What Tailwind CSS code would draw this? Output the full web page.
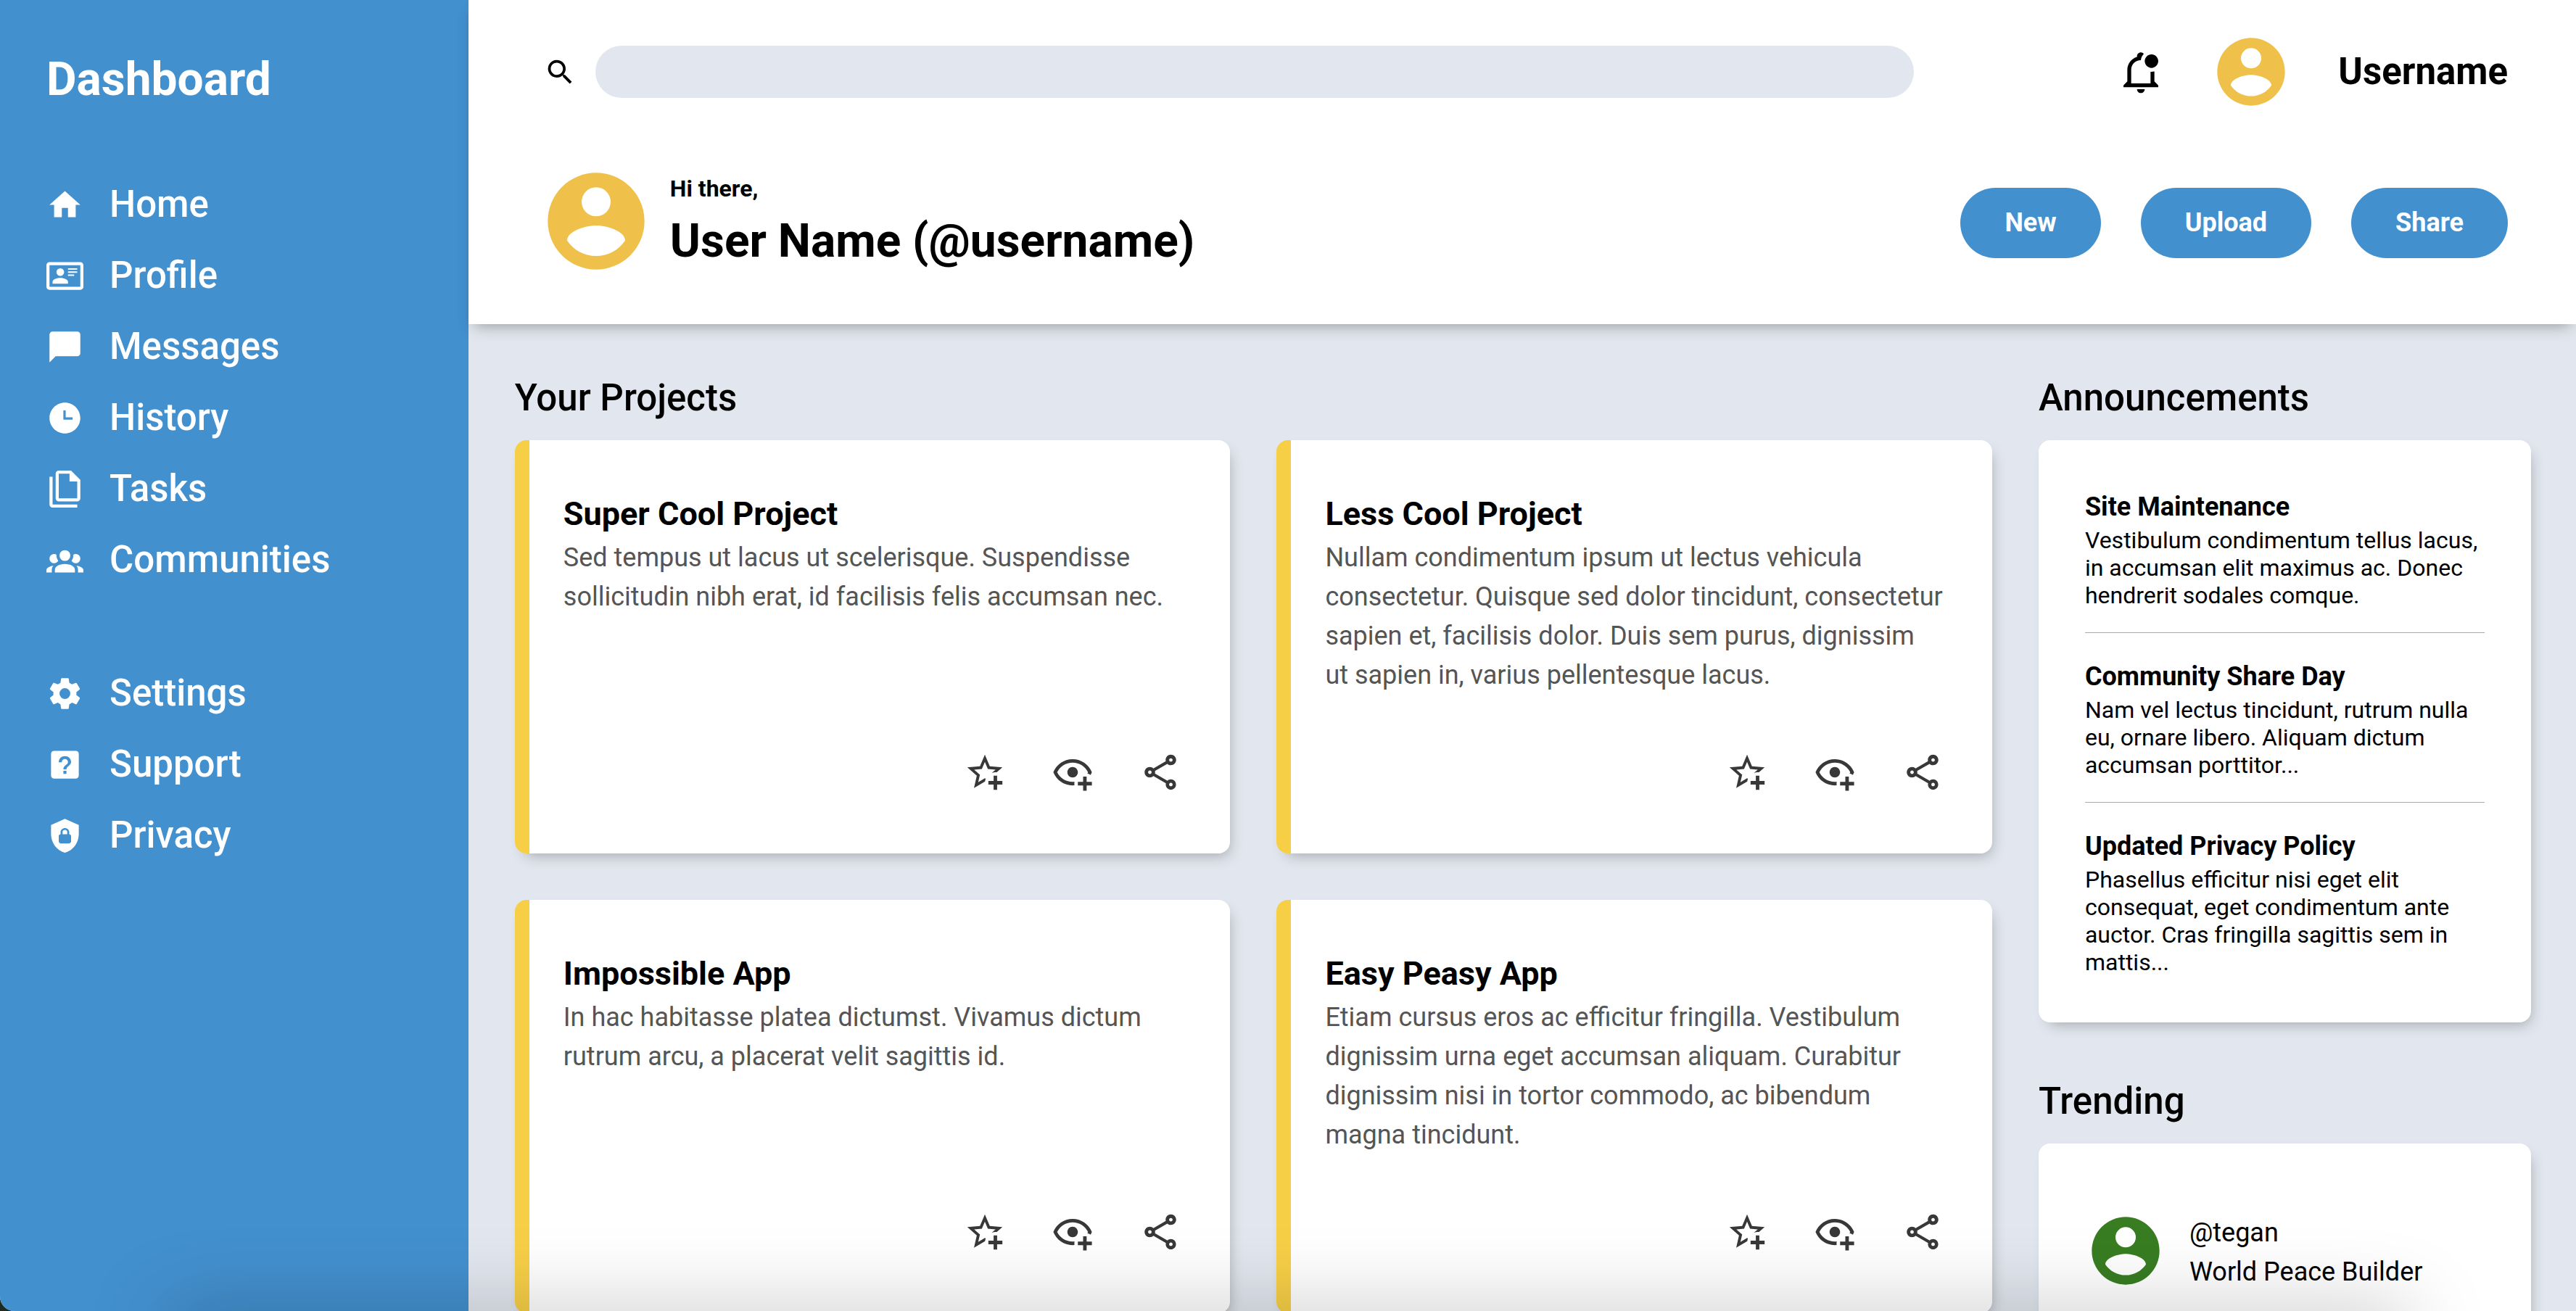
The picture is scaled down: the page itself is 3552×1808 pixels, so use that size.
<!DOCTYPE html>
<html lang="en">
<head>
<meta charset="utf-8">
<meta name="viewport" content="width=device-width, initial-scale=1">
<title>Dashboard</title>
<script src="https://cdn.jsdelivr.net/npm/@tailwindcss/browser@4"></script>
</head>
<body class="bg-[#1f2a22] font-['Roboto',sans-serif] text-black">

<!-- Icon sprite -->
<svg class="hidden" aria-hidden="true">
  <symbol id="home" viewBox="0 0 24 24"><path d="M10,20V14H14V20H19V12H22L12,3L2,12H5V20H10Z"/></symbol>
  <symbol id="profile" viewBox="0 0 24 24"><path d="M22,3H2C0.91,3.04 0.04,3.91 0,5V19C0.04,20.09 0.91,20.96 2,21H22C23.09,20.96 23.96,20.09 24,19V5C23.96,3.91 23.09,3.04 22,3M22,19H2V5H22V19M14,17V15.75C14,14.09 10.66,13.25 9,13.25C7.34,13.25 4,14.09 4,15.75V17H14M9,7A2.5,2.5 0 0,0 6.5,9.5A2.5,2.5 0 0,0 9,12A2.5,2.5 0 0,0 11.5,9.5A2.5,2.5 0 0,0 9,7M14,7V8H20V7H14M14,9V10H20V9H14M14,11V12H18V11H14"/></symbol>
  <symbol id="messages" viewBox="0 0 24 24"><path d="M20,2H4A2,2 0 0,0 2,4V22L6,18H20A2,2 0 0,0 22,16V4C22,2.89 21.1,2 20,2Z"/></symbol>
  <symbol id="history" viewBox="0 0 24 24"><path d="M12 2C6.5 2 2 6.5 2 12C2 17.5 6.5 22 12 22C17.5 22 22 17.5 22 12S17.5 2 12 2M17 13H11V7H12.5V11.5H17V13Z"/></symbol>
  <symbol id="tasks" viewBox="0 0 24 24"><path d="M16 0H8C6.9 0 6 .9 6 2V18C6 19.1 6.9 20 8 20H20C21.1 20 22 19.1 22 18V6L16 0M20 18H8V2H15V7H20V18M4 4V22H20V24H4C2.9 24 2 23.1 2 22V4H4Z"/></symbol>
  <symbol id="communities" viewBox="0 0 24 24"><path d="M12,5.5A3.5,3.5 0 0,1 15.5,9A3.5,3.5 0 0,1 12,12.5A3.5,3.5 0 0,1 8.5,9A3.5,3.5 0 0,1 12,5.5M5,8C5.56,8 6.08,8.15 6.53,8.42C6.38,9.85 6.8,11.27 7.66,12.38C7.16,13.34 6.16,14 5,14A3,3 0 0,1 2,11A3,3 0 0,1 5,8M19,8A3,3 0 0,1 22,11A3,3 0 0,1 19,14C17.84,14 16.84,13.34 16.34,12.38C17.2,11.27 17.62,9.85 17.47,8.42C17.92,8.15 18.44,8 19,8M5.5,18.25C5.5,16.18 8.41,14.5 12,14.5C15.59,14.5 18.5,16.18 18.5,18.25V20H5.5V18.25M0,20V18.5C0,17.11 1.89,15.94 4.45,15.6C3.86,16.28 3.5,17.22 3.5,18.25V20H0M24,20H20.5V18.25C20.5,17.22 20.14,16.28 19.55,15.6C22.11,15.94 24,17.11 24,18.5V20Z"/></symbol>
  <symbol id="settings" viewBox="0 0 24 24"><path d="M12,15.5A3.5,3.5 0 0,1 8.5,12A3.5,3.5 0 0,1 12,8.5A3.5,3.5 0 0,1 15.5,12A3.5,3.5 0 0,1 12,15.5M19.43,12.97C19.47,12.65 19.5,12.33 19.5,12C19.5,11.67 19.47,11.34 19.43,11L21.54,9.37C21.73,9.22 21.78,8.95 21.66,8.73L19.66,5.27C19.54,5.05 19.27,4.96 19.05,5.05L16.56,6.05C16.04,5.66 15.5,5.32 14.87,5.07L14.5,2.42C14.46,2.18 14.25,2 14,2H10C9.75,2 9.54,2.18 9.5,2.42L9.13,5.07C8.5,5.32 7.96,5.66 7.44,6.05L4.95,5.05C4.73,4.96 4.46,5.05 4.34,5.27L2.34,8.73C2.21,8.95 2.27,9.22 2.46,9.37L4.57,11C4.53,11.34 4.5,11.67 4.5,12C4.5,12.33 4.53,12.65 4.57,12.97L2.46,14.63C2.27,14.78 2.21,15.05 2.34,15.27L4.34,18.73C4.46,18.95 4.73,19.03 4.95,18.95L7.44,17.94C7.96,18.34 8.5,18.68 9.13,18.93L9.5,21.58C9.54,21.82 9.75,22 10,22H14C14.25,22 14.46,21.82 14.5,21.58L14.87,18.93C15.5,18.67 16.04,18.34 16.56,17.94L19.05,18.95C19.27,19.03 19.54,18.95 19.66,18.73L21.66,15.27C21.78,15.05 21.73,14.78 21.54,14.63L19.43,12.97Z"/></symbol>
  <symbol id="support" viewBox="0 0 24 24"><path d="M5,3H19A2,2 0 0,1 21,5V19A2,2 0 0,1 19,21H5A2,2 0 0,1 3,19V5A2,2 0 0,1 5,3M11,16V18H13V16H11M12,6.5C9.8,6.5 8,8.1 8,10.5H10C10,9.2 10.9,8.4 12,8.4C13.1,8.4 14,9.2 14,10.3C14,12.2 11,12.2 11,15H13C13,13 16,12.5 16,10.3C16,8.1 14.2,6.5 12,6.5Z"/></symbol>
  <symbol id="privacy" viewBox="0 0 24 24"><path d="M12,1L3,5V11C3,16.55 6.84,21.74 12,23C17.16,21.74 21,16.55 21,11V5L12,1M12,7C13.4,7 14.8,8.1 14.8,9.5V11C15.4,11 16,11.6 16,12.3V15.8C16,16.4 15.4,17 14.7,17H9.2C8.6,17 8,16.4 8,15.7V12.2C8,11.6 8.6,11 9.2,11V9.5C9.2,8.1 10.6,7 12,7M12,8.2C11.2,8.2 10.5,8.7 10.5,9.5V11H13.5V9.5C13.5,8.7 12.8,8.2 12,8.2Z"/></symbol>
  <symbol id="search" viewBox="0 0 24 24"><path d="M9.5,3A6.5,6.5 0 0,1 16,9.5C16,11.11 15.41,12.59 14.44,13.73L14.71,14H15.5L20.5,19L19,20.5L14,15.5V14.71L13.73,14.44C12.59,15.41 11.11,16 9.5,16A6.5,6.5 0 0,1 3,9.5A6.5,6.5 0 0,1 9.5,3M9.5,5C7,5 5,7 5,9.5C5,12 7,14 9.5,14C12,14 14,12 14,9.5C14,7 12,5 9.5,5Z"/></symbol>
  <symbol id="bell" viewBox="0 0 24 24"><path d="M19 17V11.8C18.5 11.9 18 12 17.5 12H17V18H7V11C7 8.2 9.2 6 12 6C12.1 4.7 12.7 3.6 13.5 2.7C13.2 2.3 12.6 2 12 2C10.9 2 10 2.9 10 4V4.3C7 5.2 5 7.9 5 11V17L3 19V20H21V19L19 17M10 21C10 22.1 10.9 23 12 23S14 22.1 14 21H10M21 6.5C21 8.4 19.4 10 17.5 10S14 8.4 14 6.5 15.6 3 17.5 3 21 4.6 21 6.5"/></symbol>
  <symbol id="account" viewBox="0 0 24 24"><path d="M12,19.2C9.5,19.2 7.29,17.92 6,16C6.03,14 10,12.9 12,12.9C14,12.9 17.97,14 18,16C16.71,17.92 14.5,19.2 12,19.2M12,5A3,3 0 0,1 15,8A3,3 0 0,1 12,11A3,3 0 0,1 9,8A3,3 0 0,1 12,5M12,2A10,10 0 0,0 2,12A10,10 0 0,0 12,22A10,10 0 0,0 22,12C22,6.47 17.5,2 12,2Z"/></symbol>
  <symbol id="star" viewBox="0 0 24 24"><path d="M5.8 21L7.4 14L2 9.2L9.2 8.6L12 2L14.8 8.6L22 9.2L18.8 12H18C17.3 12 16.6 12.1 15.9 12.4L18.1 10.5L13.7 10.1L12 6.1L10.3 10.1L5.9 10.5L9.2 13.4L8.2 17.7L12 15.4L12.5 15.7C12.3 16.2 12.1 16.8 12.1 17.3L5.8 21M17 14V17H14V19H17V22H19V19H22V17H19V14H17Z"/></symbol>
  <symbol id="eye" viewBox="0 0 24 24"><path d="M12 4.5C7 4.5 2.73 7.61 1 12C2.73 16.39 7 19.5 12 19.5C12.36 19.5 12.72 19.5 13.08 19.45C13.03 19.13 13 18.82 13 18.5C13 18.14 13.04 17.78 13.1 17.42C12.74 17.46 12.37 17.5 12 17.5C8.24 17.5 4.83 15.36 3.18 12C4.83 8.64 8.24 6.5 12 6.5S19.17 8.64 20.82 12C20.7 12.24 20.56 12.45 20.43 12.68C21.09 12.84 21.72 13.11 22.29 13.5C22.56 13 22.8 12.5 23 12C21.27 7.61 17 4.5 12 4.5M12 9C10.34 9 9 10.34 9 12S10.34 15 12 15 15 13.66 15 12 13.66 9 12 9M18 14.5V17.5H15V19.5H18V22.5H20V19.5H23V17.5H20V14.5H18Z"/></symbol>
  <symbol id="share" viewBox="0 0 24 24"><path d="M18 16.08C17.24 16.08 16.56 16.38 16.04 16.85L8.91 12.7C8.96 12.47 9 12.24 9 12S8.96 11.53 8.91 11.3L15.96 7.19C16.5 7.69 17.21 8 18 8C19.66 8 21 6.66 21 5S19.66 2 18 2 15 3.34 15 5C15 5.24 15.04 5.47 15.09 5.7L8.04 9.81C7.5 9.31 6.79 9 6 9C4.34 9 3 10.34 3 12S4.34 15 6 15C6.79 15 7.5 14.69 8.04 14.19L15.16 18.34C15.11 18.55 15.08 18.77 15.08 19C15.08 20.61 16.39 21.91 18 21.91S20.92 20.61 20.92 19C20.92 17.39 19.61 16.08 18 16.08M18 4C18.55 4 19 4.45 19 5S18.55 6 18 6 17 5.55 17 5 17.45 4 18 4M6 13C5.45 13 5 12.55 5 12S5.45 11 6 11 7 11.45 7 12 6.55 13 6 13M18 20C17.45 20 17 19.55 17 19S17.45 18 18 18 19 18.45 19 19 18.55 20 18 20Z"/></symbol>
</svg>

<div class="relative grid h-screen grid-cols-[2fr_9fr] overflow-hidden rounded-bl-[20px] bg-[#e2e7ef]">

  <aside class="bg-[#4390cf] pl-16 text-white">
    <h1 class="pt-[72px] text-[64px]/[75px] font-bold">Dashboard</h1>
    <nav class="pt-[86px] text-[51px]/[60px] font-medium" aria-label="Main">
      <ul>
        <li><a href="#" class="flex h-[98px] items-center gap-9"><svg class="size-[51px] fill-current"><use href="#home"/></svg>Home</a></li>
        <li><a href="#" class="flex h-[98px] items-center gap-9"><svg class="size-[51px] fill-current"><use href="#profile"/></svg>Profile</a></li>
        <li><a href="#" class="flex h-[98px] items-center gap-9"><svg class="size-[51px] fill-current"><use href="#messages"/></svg>Messages</a></li>
        <li><a href="#" class="flex h-[98px] items-center gap-9"><svg class="size-[51px] fill-current"><use href="#history"/></svg>History</a></li>
        <li><a href="#" class="flex h-[98px] items-center gap-9"><svg class="size-[51px] fill-current"><use href="#tasks"/></svg>Tasks</a></li>
        <li><a href="#" class="flex h-[98px] items-center gap-9"><svg class="size-[51px] fill-current"><use href="#communities"/></svg>Communities</a></li>
      </ul>
      <ul class="pt-[86px]">
        <li><a href="#" class="flex h-[98px] items-center gap-9"><svg class="size-[51px] fill-current"><use href="#settings"/></svg>Settings</a></li>
        <li><a href="#" class="flex h-[98px] items-center gap-9"><svg class="size-[51px] fill-current"><use href="#support"/></svg>Support</a></li>
        <li><a href="#" class="flex h-[98px] items-center gap-9"><svg class="size-[51px] fill-current"><use href="#privacy"/></svg>Privacy</a></li>
      </ul>
    </nav>
  </aside>

  <div class="min-w-0">
    <header class="bg-white pt-[43px] pr-[94px] pb-[62px] pl-24 shadow-[0_10px_20px_-8px_rgba(0,0,0,0.35)]">
      <div class="flex items-center">
        <label for="q" class="pr-[26px] pl-2"><svg class="size-[45px]" role="img" aria-label="Search"><use href="#search"/></svg></label>
        <input id="q" type="search" class="h-[72px] min-w-0 flex-1 rounded-full bg-[#e2e7ef] px-8 text-[32px] outline-none">
        <button type="button" aria-label="Notifications" class="ml-[281px]"><svg class="size-16"><use href="#bell"/></svg></button>
        <svg class="ml-16 size-28 fill-[#efc14a]"><use href="#account"/></svg>
        <span class="ml-16 text-[51px]/[60px] font-bold">Username</span>
      </div>
      <div class="flex items-center justify-between pt-[70px]">
        <div class="flex items-center gap-[22px]">
          <svg class="size-40 fill-[#efc14a]"><use href="#account"/></svg>
          <div class="font-bold">
            <p class="text-[32px]/[38px]">Hi there,</p>
            <p class="pt-4 text-[64px]/[75px]">User Name (@username)</p>
          </div>
        </div>
        <div class="flex gap-[55px] pt-1 text-[36px]/[42px] font-bold text-white">
          <button type="button" class="h-[97px] rounded-full bg-[#4390cf] px-[61px]">New</button>
          <button type="button" class="h-[97px] rounded-full bg-[#4390cf] px-[61px]">Upload</button>
          <button type="button" class="h-[97px] rounded-full bg-[#4390cf] px-[61px]">Share</button>
        </div>
      </div>
    </header>

    <main class="grid grid-cols-[3fr_1fr] items-start gap-16 pt-[72px] pr-[62px] pl-16">
      <section>
        <h2 class="pb-7 text-[51px]/[60px] font-medium">Your Projects</h2>
        <div class="grid grid-cols-2 gap-16">
          <article class="flex h-[570px] flex-col rounded-2xl border-l-[20px] border-[#f7cf47] bg-white pt-[75px] pr-[67px] pb-[83px] pl-[47px] shadow-[6px_10px_20px_-8px_rgba(0,0,0,0.3)]">
            <h3 class="pb-[7px] text-[45px]/[53px] font-bold">Super Cool Project</h3>
            <p class="text-[36px]/[54px] text-[#555]">Sed tempus ut lacus ut scelerisque. Suspendisse sollicitudin nibh erat, id facilisis felis accumsan nec.</p>
            <div class="mt-auto flex justify-end gap-[63px] text-[#383838]">
              <button type="button" aria-label="Star"><svg class="size-[58px] fill-current"><use href="#star"/></svg></button>
              <button type="button" aria-label="Watch"><svg class="size-[58px] fill-current"><use href="#eye"/></svg></button>
              <button type="button" aria-label="Share"><svg class="size-[58px] fill-current"><use href="#share"/></svg></button>
            </div>
          </article>
          <article class="flex h-[570px] flex-col rounded-2xl border-l-[20px] border-[#f7cf47] bg-white pt-[75px] pr-[67px] pb-[83px] pl-[47px] shadow-[6px_10px_20px_-8px_rgba(0,0,0,0.3)]">
            <h3 class="pb-[7px] text-[45px]/[53px] font-bold">Less Cool Project</h3>
            <p class="text-[36px]/[54px] text-[#555]">Nullam condimentum ipsum ut lectus vehicula consectetur. Quisque sed dolor tincidunt, consectetur sapien et, facilisis dolor. Duis sem purus, dignissim ut&nbsp;sapien in, varius pellentesque lacus.</p>
            <div class="mt-auto flex justify-end gap-[63px] text-[#383838]">
              <button type="button" aria-label="Star"><svg class="size-[58px] fill-current"><use href="#star"/></svg></button>
              <button type="button" aria-label="Watch"><svg class="size-[58px] fill-current"><use href="#eye"/></svg></button>
              <button type="button" aria-label="Share"><svg class="size-[58px] fill-current"><use href="#share"/></svg></button>
            </div>
          </article>
          <article class="flex h-[570px] flex-col rounded-2xl border-l-[20px] border-[#f7cf47] bg-white pt-[75px] pr-[67px] pb-[83px] pl-[47px] shadow-[6px_10px_20px_-8px_rgba(0,0,0,0.3)]">
            <h3 class="pb-[7px] text-[45px]/[53px] font-bold">Impossible App</h3>
            <p class="text-[36px]/[54px] text-[#555]">In hac habitasse platea dictumst. Vivamus dictum rutrum arcu, a placerat velit sagittis id.</p>
            <div class="mt-auto flex justify-end gap-[63px] text-[#383838]">
              <button type="button" aria-label="Star"><svg class="size-[58px] fill-current"><use href="#star"/></svg></button>
              <button type="button" aria-label="Watch"><svg class="size-[58px] fill-current"><use href="#eye"/></svg></button>
              <button type="button" aria-label="Share"><svg class="size-[58px] fill-current"><use href="#share"/></svg></button>
            </div>
          </article>
          <article class="flex h-[570px] flex-col rounded-2xl border-l-[20px] border-[#f7cf47] bg-white pt-[75px] pr-[67px] pb-[83px] pl-[47px] shadow-[6px_10px_20px_-8px_rgba(0,0,0,0.3)]">
            <h3 class="pb-[7px] text-[45px]/[53px] font-bold">Easy Peasy App</h3>
            <p class="text-[36px]/[54px] text-[#555]">Etiam cursus eros ac efficitur fringilla. Vestibulum dignissim urna eget accumsan aliquam. Curabitur dignissim nisi in tortor commodo, ac bibendum magna tincidunt.</p>
            <div class="mt-auto flex justify-end gap-[63px] text-[#383838]">
              <button type="button" aria-label="Star"><svg class="size-[58px] fill-current"><use href="#star"/></svg></button>
              <button type="button" aria-label="Watch"><svg class="size-[58px] fill-current"><use href="#eye"/></svg></button>
              <button type="button" aria-label="Share"><svg class="size-[58px] fill-current"><use href="#share"/></svg></button>
            </div>
          </article>
        </div>
      </section>

      <div>
        <section>
          <h2 class="pb-7 text-[51px]/[60px] font-medium">Announcements</h2>
          <div class="divide-y divide-[#aaa] rounded-2xl bg-white p-16 text-[32px]/[38px] shadow-[6px_10px_20px_-8px_rgba(0,0,0,0.3)]">
            <article class="pb-8">
              <h3 class="pt-[7px] pb-[5px] text-[36px]/[43px] font-bold">Site Maintenance</h3>
              <p>Vestibulum condimentum tellus lacus, in accumsan elit maximus ac. Donec hendrerit sodales comque.</p>
            </article>
            <article class="py-8">
              <h3 class="pt-[7px] pb-[5px] text-[36px]/[43px] font-bold">Community Share Day</h3>
              <p>Nam vel lectus tincidunt, rutrum nulla eu, ornare libero. Aliquam dictum accumsan porttitor...</p>
            </article>
            <article class="pt-8">
              <h3 class="pt-[7px] pb-[5px] text-[36px]/[43px] font-bold">Updated Privacy Policy</h3>
              <p>Phasellus efficitur nisi eget elit consequat, eget condimentum ante auctor. Cras fringilla sagittis sem in mattis...</p>
            </article>
          </div>
        </section>
        <section class="pt-[79px]">
          <h2 class="pb-7 text-[51px]/[60px] font-medium">Trending</h2>
          <div class="rounded-2xl bg-white p-16 shadow-[6px_10px_20px_-8px_rgba(0,0,0,0.3)]">
            <div class="flex items-center gap-8 py-7">
              <svg class="size-28 shrink-0 fill-[#387d22]"><use href="#account"/></svg>
              <p class="pt-1 text-[36px]/[54px]">@tegan<br>World Peace Builder</p>
            </div>
          </div>
        </section>
      </div>
    </main>
  </div>

  <!-- Soft shade rising from the bottom edge -->
  <div class="pointer-events-none absolute inset-x-[230px] top-full h-16 shadow-[0_0_110px_rgba(0,0,0,0.26)]"></div>
</div>
</body>
</html>
